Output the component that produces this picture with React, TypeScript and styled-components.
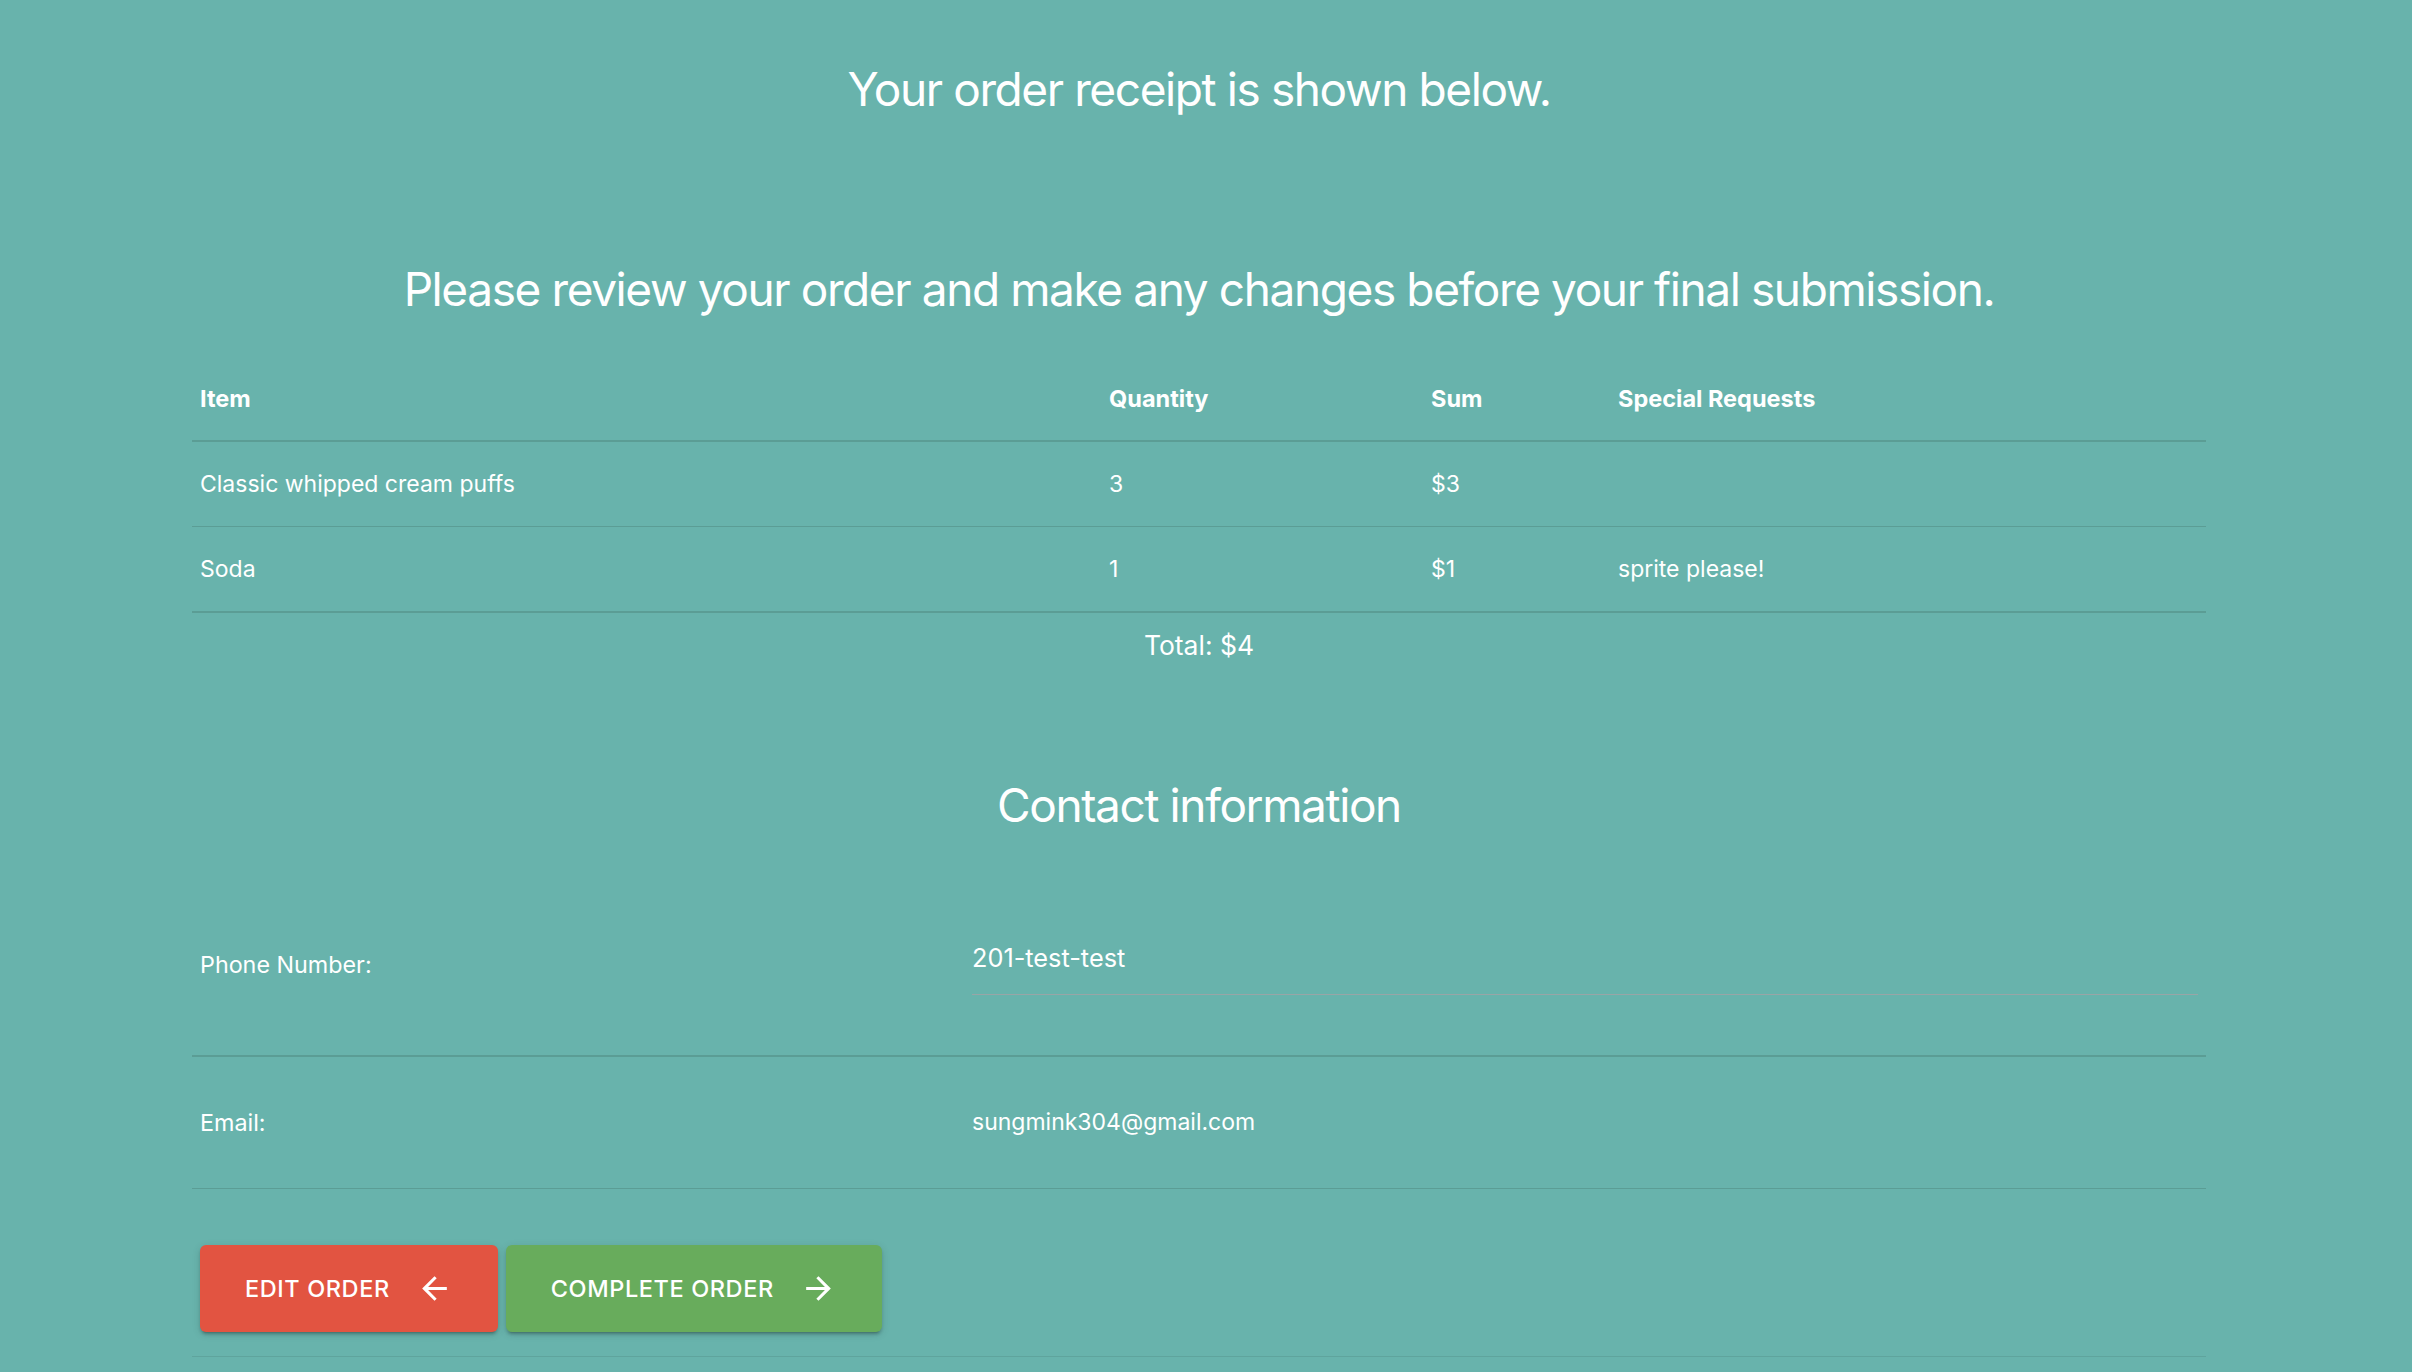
import React from 'react';
import styled, { createGlobalStyle } from 'styled-components';

const GlobalStyle = createGlobalStyle`
  body {
    margin: 0;
    background-color: #68b3ac;
    color: #ffffff;
    font-family: Inter, "Liberation Sans", sans-serif;
  }
`;

const Page = styled.div`
  padding: 0 206px 0 192px;
`;

const Heading = styled.h1<{ $top: number }>`
  margin: ${(p) => p.$top}px 0 0;
  font-size: 46px;
  font-weight: 400;
  line-height: 56px;
  letter-spacing: -1.4px;
  text-align: center;
`;

const OrderTable = styled.table`
  width: 100%;
  margin-top: 40px;
  border-collapse: collapse;
  table-layout: fixed;
`;

const HeadCell = styled.th<{ $width?: number }>`
  width: ${(p) => (p.$width ? `${p.$width}px` : 'auto')};
  height: 84px;
  padding: 0 8px;
  box-sizing: border-box;
  text-align: left;
  font-size: 23.5px;
  font-weight: 700;
  border-bottom: 2px solid #5b9d95;
`;

const Cell = styled.td<{ $last?: boolean }>`
  height: 84px;
  padding: 0 8px;
  font-size: 23px;
  font-weight: 400;
  border-bottom: ${(p) => (p.$last ? '2px' : '1px')} solid #5b9d95;
`;

const Total = styled.div`
  margin-top: 14px;
  font-size: 26.5px;
  line-height: 37px;
  text-align: center;
`;

const ContactRow = styled.div<{ $first?: boolean }>`
  display: grid;
  grid-template-columns: 772px 1fr;
  align-items: ${(p) => (p.$first ? 'start' : 'center')};
  min-height: 132px;
  padding: ${(p) => (p.$first ? '108px 0 60px' : '0')};
  box-sizing: border-box;
  border-bottom: ${(p) => (p.$first ? '2px' : '1px')} solid #5b9d95;
`;

const Label = styled.div<{ $shift?: number }>`
  padding: 0 8px;
  margin-top: ${(p) => p.$shift || 0}px;
  font-size: 23.3px;
  line-height: 33px;
`;

const Value = styled.div`
  padding: 0 8px;
  font-size: 23px;
  line-height: 33px;
`;

const InputValue = styled.div`
  margin: 0 8px;
  padding-bottom: 20px;
  font-size: 25.3px;
  line-height: 33px;
  border-bottom: 1px solid #98a5a6;
`;

const ButtonRow = styled.div`
  display: flex;
  gap: 8px;
  padding: 56px 8px 24px;
  border-bottom: 1px solid #5fa49d;
`;

const ActionButton = styled.button<{ $color: string }>`
  display: flex;
  align-items: center;
  gap: 26px;
  height: 87px;
  padding: 0 45px;
  border: none;
  border-radius: 6px;
  background-color: ${(p) => p.$color};
  color: #ffffff;
  font-family: Inter, "Liberation Sans", sans-serif;
  font-size: 23.5px;
  font-weight: 500;
  letter-spacing: 0.6px;
  text-transform: uppercase;
  cursor: pointer;
  box-shadow: 0 4px 2px -3px rgba(0, 0, 0, 0.2), 0 3px 3px 0 rgba(0, 0, 0, 0.14),
    0 2px 8px 0 rgba(0, 0, 0, 0.12);

  svg {
    width: 37px;
    height: 37px;
    fill: currentColor;
  }
`;

const items = [
  { name: 'Classic whipped cream puffs', quantity: 3, sum: 3, request: '' },
  { name: 'Soda', quantity: 1, sum: 1, request: 'sprite please!' },
];

const ArrowBack = () => (
  <svg viewBox="0 0 24 24">
    <path d="M20 11H7.83l5.59-5.59L12 4l-8 8 8 8 1.41-1.41L7.83 13H20v-2z" />
  </svg>
);

const ArrowForward = () => (
  <svg viewBox="0 0 24 24">
    <path d="M12 4l-1.41 1.41L16.17 11H4v2h12.17l-5.58 5.59L12 20l8-8z" />
  </svg>
);

const App = () => {
  const total = items.reduce((acc, item) => acc + item.sum, 0);

  return (
    <Page>
      <GlobalStyle />
      <Heading $top={61}>Your order receipt is shown below.</Heading>
      <Heading $top={144}>Please review your order and make any changes before your final submission.</Heading>

      <OrderTable>
        <thead>
          <tr>
            <HeadCell $width={909}>Item</HeadCell>
            <HeadCell $width={322}>Quantity</HeadCell>
            <HeadCell $width={187}>Sum</HeadCell>
            <HeadCell>Special Requests</HeadCell>
          </tr>
        </thead>
        <tbody>
          {items.map((item, i) => {
            const last = i === items.length - 1;
            return (
              <tr key={item.name}>
                <Cell $last={last}>{item.name}</Cell>
                <Cell $last={last}>{item.quantity}</Cell>
                <Cell $last={last}>${item.sum}</Cell>
                <Cell $last={last}>{item.request}</Cell>
              </tr>
            );
          })}
        </tbody>
      </OrderTable>

      <Total>Total: ${total}</Total>

      <Heading $top={113}>Contact information</Heading>

      <ContactRow $first>
        <Label $shift={7}>Phone Number:</Label>
        <InputValue>201-test-test</InputValue>
      </ContactRow>
      <ContactRow>
        <Label>Email:</Label>
        <Value>sungmink304@gmail.com</Value>
      </ContactRow>

      <ButtonRow>
        <ActionButton $color="#e25441">
          Edit order
          <ArrowBack />
        </ActionButton>
        <ActionButton $color="#68ac5c">
          Complete order
          <ArrowForward />
        </ActionButton>
      </ButtonRow>
    </Page>
  );
};

export default App;
